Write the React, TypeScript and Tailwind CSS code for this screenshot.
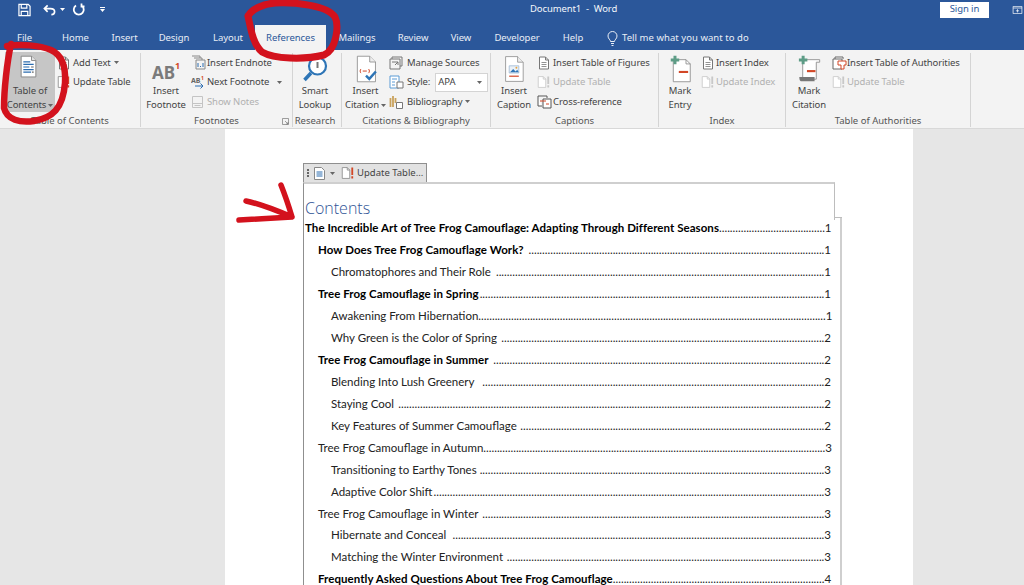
import React from "react"

const tabs = [
  { label: "File", w: "w-[49px]" },
  { label: "Home", w: "w-[53px]" },
  { label: "Insert", w: "w-[45px]" },
  { label: "Design", w: "w-[54px]" },
  { label: "Layout", w: "w-[54px]" },
]
const tabsRight = [
  { label: "Mailings", w: "w-[62px]" },
  { label: "Review", w: "w-[50px]" },
  { label: "View", w: "w-[46px]" },
  { label: "Developer", w: "w-[66px]" },
  { label: "Help", w: "w-[46px]" },
]

const tocRows: { text: string; page: number; level: 0 | 1 | 2; dots: number; bold?: boolean }[] = [
  { text: "The Incredible Art of Tree Frog Camouflage: Adapting Through Different Seasons", page: 1, level: 0, dots: 39, bold: true },
  { text: "How Does Tree Frog Camouflage Work? ", page: 1, level: 1, dots: 109, bold: true },
  { text: "Chromatophores and Their Role ", page: 1, level: 2, dots: 121 },
  { text: "Tree Frog Camouflage in Spring", page: 1, level: 1, dots: 127, bold: true },
  { text: "Awakening From Hibernation", page: 1, level: 2, dots: 128 },
  { text: "Why Green is the Color of Spring ", page: 2, level: 2, dots: 119 },
  { text: "Tree Frog Camouflage in Summer ", page: 2, level: 1, dots: 122, bold: true },
  { text: "Blending Into Lush Greenery ", page: 2, level: 2, dots: 126 },
  { text: "Staying Cool ", page: 2, level: 2, dots: 157 },
  { text: "Key Features of Summer Camouflage ", page: 2, level: 2, dots: 112 },
  { text: "Tree Frog Camouflage in Autumn", page: 3, level: 1, dots: 126 },
  { text: "Transitioning to Earthy Tones", page: 3, level: 2, dots: 127 },
  { text: "Adaptive Color Shift", page: 3, level: 2, dots: 144 },
  { text: "Tree Frog Camouflage in Winter ", page: 3, level: 1, dots: 126 },
  { text: "Hibernate and Conceal ", page: 3, level: 2, dots: 137 },
  { text: "Matching the Winter Environment", page: 3, level: 2, dots: 117 },
  { text: "Frequently Asked Questions About Tree Frog Camouflage", page: 4, level: 1, dots: 78, bold: true },
]

const Caret = ({ className = "text-[#666]" }: { className?: string }) => (
  <svg width="5" height="3" viewBox="0 0 5 3" className={`inline-block ${className}`}>
    <path d="M0 0h5L2.5 3z" fill="currentColor" />
  </svg>
)

const PageIcon = ({ size = 14, faded = false }: { size?: number; faded?: boolean }) => (
  <svg width={size} height={size} viewBox="0 0 14 14" fill="none" stroke={faded ? "#c8c8c8" : "#777"}>
    <path d="M2.5 1h6l3 3v9h-9z" fill="#fff" />
    <path d="M8.5 1v3h3" />
    <path d="M4.5 6.5h5M4.5 8.5h5M4.5 10.5h5" strokeWidth=".8" />
  </svg>
)

const UpdateIcon = ({ faded = false }: { faded?: boolean }) => (
  <svg width="15" height="14" viewBox="0 0 18 16" fill="none">
    <path d="M1.5 1.5h6l3 3v10h-9z" fill="#fff" stroke={faded ? "#c8c8c8" : "#888"} />
    <path d="M7.5 1.5v3h3" stroke={faded ? "#c8c8c8" : "#888"} />
    <path d="M13.5 1.5v9M13.5 12v2.5" stroke={faded ? "#c8c8c8" : "#d24726"} strokeWidth="2.2" />
  </svg>
)

const DocOutline = ({ children, width = 26 }: { children?: React.ReactNode; width?: number }) => (
  <svg width={width} height="28" viewBox="0 0 30 34" fill="none">
    <path d="M4.5 1.5h15l7 7v24h-22z" fill="#fff" stroke="#8a8a8a" />
    <path d="M19.5 1.5v7h7" fill="#eee" stroke="#8a8a8a" />
    {children}
  </svg>
)

const SmallLabel = ({ children, faded }: { children: React.ReactNode; faded?: boolean }) => (
  <span className={`whitespace-nowrap ${faded ? "text-[#b1b1b1]" : "text-[#444]"}`}>{children}</span>
)

const SmallButton = ({
  icon,
  label,
  faded,
  caret,
  iconWidth = "w-[16px]",
}: {
  icon: React.ReactNode
  label: string
  faded?: boolean
  caret?: boolean
  iconWidth?: string
}) => (
  <div className="flex h-[19.5px] items-center">
    <span className={`flex ${iconWidth} shrink-0 justify-start`}>{icon}</span>
    <SmallLabel faded={faded}>{label}</SmallLabel>
    {caret && (
      <span className="ml-[3px] flex items-center">
        <Caret />
      </span>
    )}
  </div>
)

const BigButton = ({
  icon,
  lines,
  caret,
  width,
}: {
  icon: React.ReactNode
  lines: [string, string]
  caret?: boolean
  width: string
}) => (
  <div className={`flex ${width} shrink-0 flex-col items-center`}>
    <div className="flex h-[31px] items-center justify-center">{icon}</div>
    <div className="text-center leading-[14px] text-[#444]">
      <div className="whitespace-nowrap">{lines[0]}</div>
      <div className="whitespace-nowrap">
        {lines[1]}
        {caret && (
          <span className="ml-[2px] align-middle">
            <Caret />
          </span>
        )}
      </div>
    </div>
  </div>
)

const Group = ({
  label,
  width,
  launcher,
  labelPad = "",
  children,
}: {
  label: string
  width: string
  launcher?: boolean
  labelPad?: string
  children: React.ReactNode
}) => (
  <div className={`relative mb-[1px] mt-[3px] flex ${width} shrink-0 flex-col border-r border-[#d4d4d4]`}>
    <div className="flex h-[61px] shrink-0 items-start">{children}</div>
    <div className={`mt-[1px] text-center text-[9.5px] leading-[12px] tracking-normal text-[#555] ${labelPad}`}>{label}</div>
    {launcher && (
      <svg width="7" height="7" viewBox="0 0 7 7" className="absolute bottom-[2px] right-[3px]" fill="none" stroke="#777">
        <path d="M.5 .5h6v6h-6zM3 3l3 3M4 6h2V4" strokeWidth=".7" />
      </svg>
    )}
  </div>
)

const Ribbon = () => (
  <div className="flex h-[78px] bg-[#f3f3f3] font-['Noto_Sans',sans-serif] text-[9.5px] tracking-[-0.1px]">
    <Group label="Table of Contents" width="w-[141px]">
      <div className="mt-[-1px] ml-[5px] flex h-[60px] w-[50px] flex-col items-center bg-[#c6c6c6]">
        <div className="flex h-[32px] items-center pr-[3px]">
          <svg width="19" height="24" viewBox="0 0 22 26" fill="none">
            <path d="M2.5 .5h12l5 5v19h-17z" fill="#fff" stroke="#7d7d7d" />
            <path d="M14.5 .5v5h5" fill="#e5e5e5" stroke="#7d7d7d" />
            <path d="M5 7h8M5 10h12M5 13h7M5 16h12M5 19h9" stroke="#2b6cb0" strokeWidth="1.3" />
            <path d="M14 13h3M15 19h2" stroke="#666" strokeWidth="1.3" />
          </svg>
        </div>
        <div className="mt-[2px] text-center leading-[14px] text-[#444]">
          <div className="whitespace-nowrap">Table of</div>
          <div className="whitespace-nowrap">
            Contents
            <span className="ml-[2px] align-middle">
              <Caret />
            </span>
          </div>
        </div>
      </div>
      <div className="ml-[2px] flex flex-col">
        <SmallButton icon={<PageIcon />} label="Add Text" caret />
        <SmallButton icon={<UpdateIcon />} label="Update Table" />
      </div>
    </Group>
    <Group label="Footnotes" width="w-[152px]" launcher>
      <BigButton
        width="w-[50px]"
        lines={["Insert", "Footnote"]}
        icon={
          <span className="mt-[4px] flex items-start font-['Noto_Sans',sans-serif] font-bold leading-none">
            <span className="mt-[3px] text-[17px] text-[#7b7b7b]">AB</span>
            <span className="text-[9px] text-[#d24726]">1</span>
          </span>
        }
      />
      <div className="flex flex-col">
        <SmallButton
          icon={
            <svg width="15" height="15" viewBox="0 0 15 15" fill="none" stroke="#888">
              <path d="M1 1h8v2M3 3h8v2M5 5h9v9H5z" fill="#f3f3f3" />
              <path d="M7 8v4M12 8v4M9.5 11v1" stroke="#2b6cb0" />
            </svg>
          }
          label="Insert Endnote"
        />
        <div className="flex items-center">
          <SmallButton
            icon={
              <svg width="15" height="14" viewBox="0 0 15 14" fill="none">
                <text x="0" y="8" fontSize="7" fontWeight="700" fill="#666" fontFamily="Noto Sans">AB</text>
                <text x="10" y="5" fontSize="5" fontWeight="700" fill="#d24726" fontFamily="Noto Sans">1</text>
                <path d="M4 11h8M9.5 8.5 12 11l-2.5 2.5" stroke="#2b6cb0" />
              </svg>
            }
            label="Next Footnote"
          />
          <span className="ml-[8px] flex">
            <Caret />
          </span>
        </div>
        <SmallButton
          faded
          icon={
            <svg width="13" height="14" viewBox="0 0 13 14" fill="none" stroke="#c4c4c4">
              <path d="M1.500 1.500h10v11h-10z" />
              <path d="M1.500 8.500h10M3.500 10.500h6" />
            </svg>
          }
          label="Show Notes"
        />
      </div>
    </Group>
    <Group label="Research" width="w-[49px]" labelPad="pr-[4px]">
      <div className="w-full pr-[4px]">
        <BigButton
          width="w-full"
          lines={["Smart", "Lookup"]}
          icon={
            <svg width="26" height="28" viewBox="0 0 26 28" fill="none">
              <circle cx="15.500" cy="11" r="8.500" fill="#fff" stroke="#2e75b6" strokeWidth="2.200" />
              <path d="M9 18 2.500 25" stroke="#2e75b6" strokeWidth="3.500" />
              <path d="M15.500 7v6" stroke="#777" strokeWidth="2" />
            </svg>
          }
        />
      </div>
    </Group>
    <Group label="Citations & Bibliography" width="w-[149px]">
      <BigButton
        width="w-[47px]"
        caret
        lines={["Insert", "Citation"]}
        icon={
          <DocOutline>
            <path d="M9 17c-1.500 1-1.500 4 0 5M18 17c1.500 1 1.500 4 0 5M11 19.500h5" stroke="#d24726" strokeWidth="1.200" />
            <path d="M15 25l4 4 8-9" stroke="#2e75b6" strokeWidth="3" />
          </DocOutline>
        }
      />
      <div className="flex flex-col">
        <SmallButton
          iconWidth="w-[18px]"
          icon={
            <svg width="15" height="14" viewBox="0 0 15 14" fill="none" stroke="#777">
              <path d="M3 3V1h10v9h-2M1 3h10v10H1z" fill="#f3f3f3" />
              <path d="M3 6h6M6 9l3-3v3" />
            </svg>
          }
          label="Manage Sources"
        />
        <div className="flex h-[19.5px] items-center">
          <span className="flex w-[18px] shrink-0">
            <svg width="15" height="14" viewBox="0 0 15 14" fill="none" stroke="#5b9bd5">
              <path d="M1 1h9v12H1z" fill="#fff" />
              <path d="M3 4h5M3 7h3M3 10h3" />
              <path d="M8 7h6v6H8z" fill="#fff" stroke="#777" />
            </svg>
          </span>
          <SmallLabel>Style:</SmallLabel>
          <div className="ml-[5px] flex h-[19px] w-[53px] items-center justify-between border border-[#d4d4d4] bg-white pl-[2px] pr-[5px]">
            <span className="text-[#444]">APA</span>
            <Caret />
          </div>
        </div>
        <SmallButton
          caret
          iconWidth="w-[18px]"
          icon={
            <svg width="15" height="14" viewBox="0 0 15 14" fill="none" stroke="#c9a25c">
              <path d="M1.500 3v9M4 1v11M6.500 3v5" strokeWidth="1.800" />
              <path d="M7.500 7.500h6v6h-6z" fill="#fff" stroke="#777" />
            </svg>
          }
          label="Bibliography"
        />
      </div>
    </Group>
    <Group label="Captions" width="w-[168px]">
      <BigButton
        width="w-[46px]"
        lines={["Insert", "Caption"]}
        icon={
          <DocOutline width={24}>
            <path d="M9 13h12v9H9z" fill="#eaf1f8" stroke="#9db8d2" />
            <path d="M10 21l4-4 3 3 2-2 2 3z" fill="#2e75b6" />
            <circle cx="18" cy="15.500" r="1.200" fill="#e8a33d" />
            <path d="M9 26h12" stroke="#d24726" strokeWidth="1.500" />
          </DocOutline>
        }
      />
      <div className="flex flex-col">
        <SmallButton icon={<PageIcon />} label="Insert Table of Figures" />
        <SmallButton faded icon={<UpdateIcon faded />} label="Update Table" />
        <SmallButton
          icon={
            <svg width="15" height="14" viewBox="0 0 15 14" fill="none" stroke="#555">
              <path d="M1 1h9v2M1 1v10h4M6 4h8v9H6z" fill="#fff" />
              <path d="M3 6h6M9 9h3" stroke="#d24726" />
            </svg>
          }
          label="Cross-reference"
        />
      </div>
    </Group>
    <Group label="Index" width="w-[127px]">
      <BigButton
        width="w-[42px]"
        lines={["Mark", "Entry"]}
        icon={
          <svg width="25" height="28" viewBox="0 0 26 33" fill="none">
            <path d="M4.500 5.500h15l5 5v21h-20z" fill="#fff" stroke="#8a8a8a" />
            <path d="M19.500 5.500v5h5" stroke="#8a8a8a" />
            <path d="M11 20h11" stroke="#d24726" strokeWidth="2.500" />
            <path d="M6.500 1v10M1.500 6h10" stroke="#5d9c86" strokeWidth="3.500" />
          </svg>
        }
      />
      <div className="flex flex-col">
        <SmallButton iconWidth="w-[15px]" icon={<PageIcon />} label="Insert Index" />
        <SmallButton iconWidth="w-[15px]" faded icon={<UpdateIcon faded />} label="Update Index" />
      </div>
    </Group>
    <Group label="Table of Authorities" width="w-[185px]">
      <BigButton
        width="w-[46px]"
        lines={["Mark", "Citation"]}
        icon={
          <svg width="25" height="28" viewBox="0 0 28 33" fill="none">
            <path d="M6 5.500h20v3h-4v20H6z" fill="#fff" stroke="#8a8a8a" />
            <path d="M2 26h18v5H4c-2 0-2-5-2-5z" fill="#777" />
            <path d="M11 19h10" stroke="#d24726" strokeWidth="2.500" />
            <path d="M6.500 1v10M1.500 6h10" stroke="#5d9c86" strokeWidth="3.500" />
          </svg>
        }
      />
      <div className="flex flex-col">
        <SmallButton
          iconWidth="w-[15px]"
          icon={
            <svg width="15" height="14" viewBox="0 0 15 14" fill="none" stroke="#666">
              <path d="M3 3V1h8v2M1 3h9v10H1z" fill="#fff" />
              <path d="M6 5h8v4h-2v4H9V9H6z" fill="#fff" stroke="#d24726" />
            </svg>
          }
          label="Insert Table of Authorities"
        />
        <SmallButton iconWidth="w-[15px]" faded icon={<UpdateIcon faded />} label="Update Table" />
      </div>
    </Group>
  </div>
)

const TitleBar = () => (
  <div className="flex h-[25px] items-center bg-[#2b579a] pb-[6px] pl-[18px] font-['Noto_Sans',sans-serif] text-[9.5px] tracking-[-0.1px] text-white">
    <svg width="13" height="14" viewBox="0 0 14 14" fill="none" stroke="#fff" strokeWidth="1.300" className="shrink-0">
      <path d="M1 1h10l2 2v10H1z" />
      <path d="M3.500 1v4h6V1M3.500 13V8.500h7V13" />
    </svg>
    <svg width="13" height="12" viewBox="0 0 14 12" fill="none" stroke="#fff" strokeWidth="1.800" className="ml-[12px] shrink-0">
      <path d="M5 1 1.500 4.500 5 8M2 4.500h6c3 0 4.500 1.500 4.500 3.500S11 11 9 11" />
    </svg>
    <span className="ml-[4px] flex">
      <Caret className="text-white" />
    </span>
    <svg width="13" height="13" viewBox="0 0 13 13" fill="none" stroke="#fff" strokeWidth="1.800" className="ml-[7px] shrink-0">
      <path d="M4 2.500A5 5 0 1 0 9.500 2.500M9.500 .5v3h3" />
    </svg>
    <span className="ml-[15px] flex flex-col items-center gap-[1px]">
      <span className="h-px w-[5px] bg-white" />
      <Caret className="text-white" />
    </span>
    <span className="ml-[425px] whitespace-nowrap text-[#f3f6fb]">Document1&nbsp; -&nbsp; Word</span>
    <div className="ml-auto mr-[23px] flex h-[16px] w-[49px] items-center justify-center bg-white text-[#2b579a]">
      Sign in
    </div>
    <svg width="11" height="8" viewBox="0 0 12 10" fill="none" stroke="#fff" className="mr-[1px] shrink-0">
      <path d="M.5 .5h11v9h-11zM.5 2.500h11M6 4v4M4 6h4" strokeWidth=".9" />
    </svg>
  </div>
)

const TabRow = () => (
  <div className="flex h-[25px] items-end bg-[#2b579a] font-['Noto_Sans',sans-serif] text-[9.5px] tracking-[-0.05px] text-[#e9eef6]">
    {tabs.map((t) => (
      <div key={t.label} className={`flex h-[25px] ${t.w} items-center justify-center pt-[2px]`}>
        {t.label}
      </div>
    ))}
    <div className="flex h-[25px] w-[71px] items-center justify-center bg-[#f3f3f3] pt-[2px] text-[#2b579a]">References</div>
    {tabsRight.map((t) => (
      <div key={t.label} className={`flex h-[25px] ${t.w} items-center justify-center pt-[2px]`}>
        {t.label}
      </div>
    ))}
    <div className="ml-[11px] flex h-[25px] items-center gap-[4px] pt-[2px]">
      <svg width="11" height="15" viewBox="0 0 11 15" fill="none" stroke="#e9eef6">
        <path d="M3.500 10.500C3.500 8.500 1 8 1 5a4.500 4.500 0 0 1 9 0c0 3-2.500 3.500-2.500 5.500zM4 12.500h3M4.500 14.500h2" />
      </svg>
      <span className="whitespace-nowrap tracking-[0.05px]">Tell me what you want to do</span>
    </div>
  </div>
)

const Row = ({ text, page, level, bold, dots }: (typeof tocRows)[number]) => (
  <div
    className={`flex h-[21.94px] items-center pr-[9px] text-[11.5px] text-[#222] ${
      level === 0 ? "pl-[1px]" : level === 1 ? "pl-[14px]" : "pl-[27px]"
    }`}
  >
    <span className={`shrink-0 whitespace-pre ${bold ? "font-bold tracking-[0.05px] text-black" : ""}`}>{text}</span>
    <span className="ml-auto whitespace-nowrap">{".".repeat(dots)}</span>
    <span className="shrink-0">{page}</span>
  </div>
)

const Toc = () => (
  <div className="ml-[78px] mt-[34px] w-[539px] font-['Lato',sans-serif]">
    <div className="flex h-[19px] w-[124px] items-center border border-b-0 border-[#8f8f8f] bg-[#e2e2e2] pl-[3px] font-['Noto_Sans',sans-serif] text-[9.5px] text-[#444]">
      <span className="flex flex-col gap-[1px]">
        <span className="h-[2px] w-[2px] bg-[#666]" />
        <span className="h-[2px] w-[2px] bg-[#666]" />
        <span className="h-[2px] w-[2px] bg-[#666]" />
      </span>
      <span className="ml-[5px] flex">
        <svg width="11" height="13" viewBox="0 0 11 13" fill="none">
          <path d="M.5 .5h7l3 3v9H.5z" fill="#fff" stroke="#888" />
          <path d="M2.500 5h6M2.500 7h6M2.500 9h6" stroke="#2b6cb0" />
        </svg>
      </span>
      <span className="ml-[5px] flex">
        <Caret />
      </span>
      <span className="ml-[6px] flex">
        <UpdateIcon />
      </span>
      <span className="ml-[1px] whitespace-nowrap">Update Table...</span>
    </div>
    <div className="h-[38px] w-[532px] border-l border-r border-t-2 border-l-[#8f8f8f] border-r-[#bdbdbd] border-t-[#cfcfcf] pl-[1px] pt-[14px] font-['Open_Sans',sans-serif] text-[16px] font-light leading-[20px] text-[#2f5496]">
      Contents
    </div>
    <div className="relative border-l border-r-2 border-l-[#8f8f8f] border-r-[#cfcfcf]">
      <div className="absolute right-[-2px] top-0 h-[1px] w-[8px] bg-[#bdbdbd]" />
      <div className="mt-[-3px]">
        {tocRows.map((r) => (
          <Row key={r.text} {...r} />
        ))}
      </div>
    </div>
  </div>
)

const RedMarks = () => (
  <svg width="1024" height="585" viewBox="0 0 1024 585" className="pointer-events-none absolute left-0 top-0" fill="none" stroke="#d3121d" strokeLinecap="round" strokeLinejoin="round">
    <path d="M248 16c3 14 5 28 14 36 12 7 42 8 62 3 13-6 15-30 11-38-8-12-42-15-60-14-12 1-23 6-27 13" strokeWidth="7" />
    <path d="M11 44C7 62 4 90 4 108c3 12 16 15 30 13 18-3 29-12 31-38 1-16-3-28-14-33-12-5-30-6-44-4" strokeWidth="6.500" />
    <path d="M246 201c15 3 32 10 46 16-16 1-36 2-53 3M281 185c4 10 8 22 11 32" strokeWidth="5.500" />
  </svg>
)

export default function App() {
  return (
    <div className="relative h-[585px] w-[1024px] overflow-hidden bg-[#e6e6e6]">
      <TitleBar />
      <TabRow />
      <Ribbon />
      <div className="h-[457px] overflow-hidden border-t border-[#d8d8d8]">
        <div className="ml-[225px] h-full w-[688px] overflow-hidden bg-white">
          <Toc />
        </div>
      </div>
      <RedMarks />
    </div>
  )
}
